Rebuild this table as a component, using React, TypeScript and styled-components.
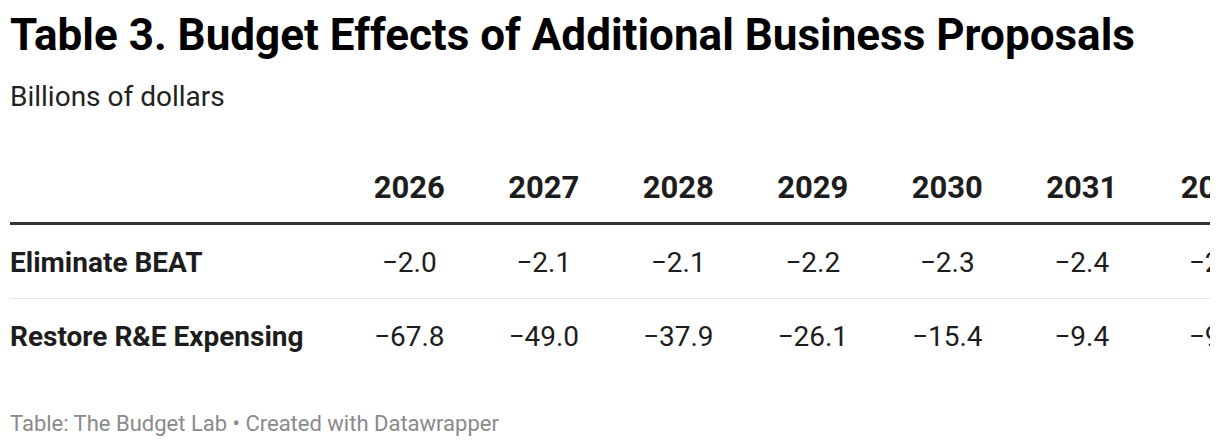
import styled, { createGlobalStyle } from "styled-components";

const GlobalStyle = createGlobalStyle`
  html, body {
    margin: 0;
    padding: 0;
    background: #ffffff;
  }
  body {
    font-family: Roboto, "Liberation Sans", sans-serif;
    color: #1d1d1d;
  }
`;

const Page = styled.div`
  padding: 8px 10px 0 10px;
  width: 1200px;
  overflow: hidden;
`;

const Title = styled.h1`
  margin: 0;
  font-size: 44px;
  font-weight: 700;
  line-height: 54px;
  color: #000;
`;

const Subtitle = styled.p`
  margin: 20px 0 0 0;
  font-size: 28px;
  line-height: 30px;
  color: #222;
`;

const TableWrap = styled.div`
  margin-top: 58px;
  width: 1200px;
  overflow: hidden;
`;

const Table = styled.table`
  border-collapse: collapse;
  table-layout: fixed;
  width: ${332 + 134.5 * 7}px;
`;

const HeadCell = styled.th<{ $label?: boolean }>`
  width: ${(p) => (p.$label ? "332px" : "134.5px")};
  font-size: 31px;
  font-weight: 700;
  text-align: ${(p) => (p.$label ? "left" : "center")};
  padding: 0 0 16px 0;
  line-height: 36px;
  color: #1d1d1d;
  border-bottom: 3px solid #333;
  white-space: nowrap;
`;

const Row = styled.tr<{ $last?: boolean }>`
  border-bottom: ${(p) => (p.$last ? "none" : "1px solid #e6e6e6")};
`;

const LabelCell = styled.td`
  font-size: 28px;
  font-weight: 700;
  line-height: 36px;
  padding: 20px 0 17px 0;
  white-space: nowrap;
  color: #1d1d1d;
`;

const ValueCell = styled.td`
  font-size: 28px;
  font-weight: 400;
  line-height: 36px;
  text-align: center;
  padding: 20px 0 17px 0;
  white-space: nowrap;
  color: #1d1d1d;
`;

const Footer = styled.p`
  margin: 39px 0 0 0;
  font-size: 22px;
  line-height: 26px;
  color: #8a8a8a;
`;

const years = ["2026", "2027", "2028", "2029", "2030", "2031", "2032"];

const rows = [
  { label: "Eliminate BEAT", values: ["−2.0", "−2.1", "−2.1", "−2.2", "−2.3", "−2.4", "−2.5"] },
  { label: "Restore R&E Expensing", values: ["−67.8", "−49.0", "−37.9", "−26.1", "−15.4", "−9.4", "−9.0"] },
];

const App = () => {
  return (
    <Page>
      <GlobalStyle />
      <Title>Table 3. Budget Effects of Additional Business Proposals</Title>
      <Subtitle>Billions of dollars</Subtitle>
      <TableWrap>
        <Table>
          <thead>
            <tr>
              <HeadCell $label></HeadCell>
              {years.map((y) => (
                <HeadCell key={y}>{y}</HeadCell>
              ))}
            </tr>
          </thead>
          <tbody>
            {rows.map((row, index) => (
              <Row key={row.label} $last={index === rows.length - 1}>
                <LabelCell>{row.label}</LabelCell>
                {row.values.map((v, i) => (
                  <ValueCell key={i}>{v}</ValueCell>
                ))}
              </Row>
            ))}
          </tbody>
        </Table>
      </TableWrap>
      <Footer>Table: The Budget Lab • Created with Datawrapper</Footer>
    </Page>
  );
};

export default App;
